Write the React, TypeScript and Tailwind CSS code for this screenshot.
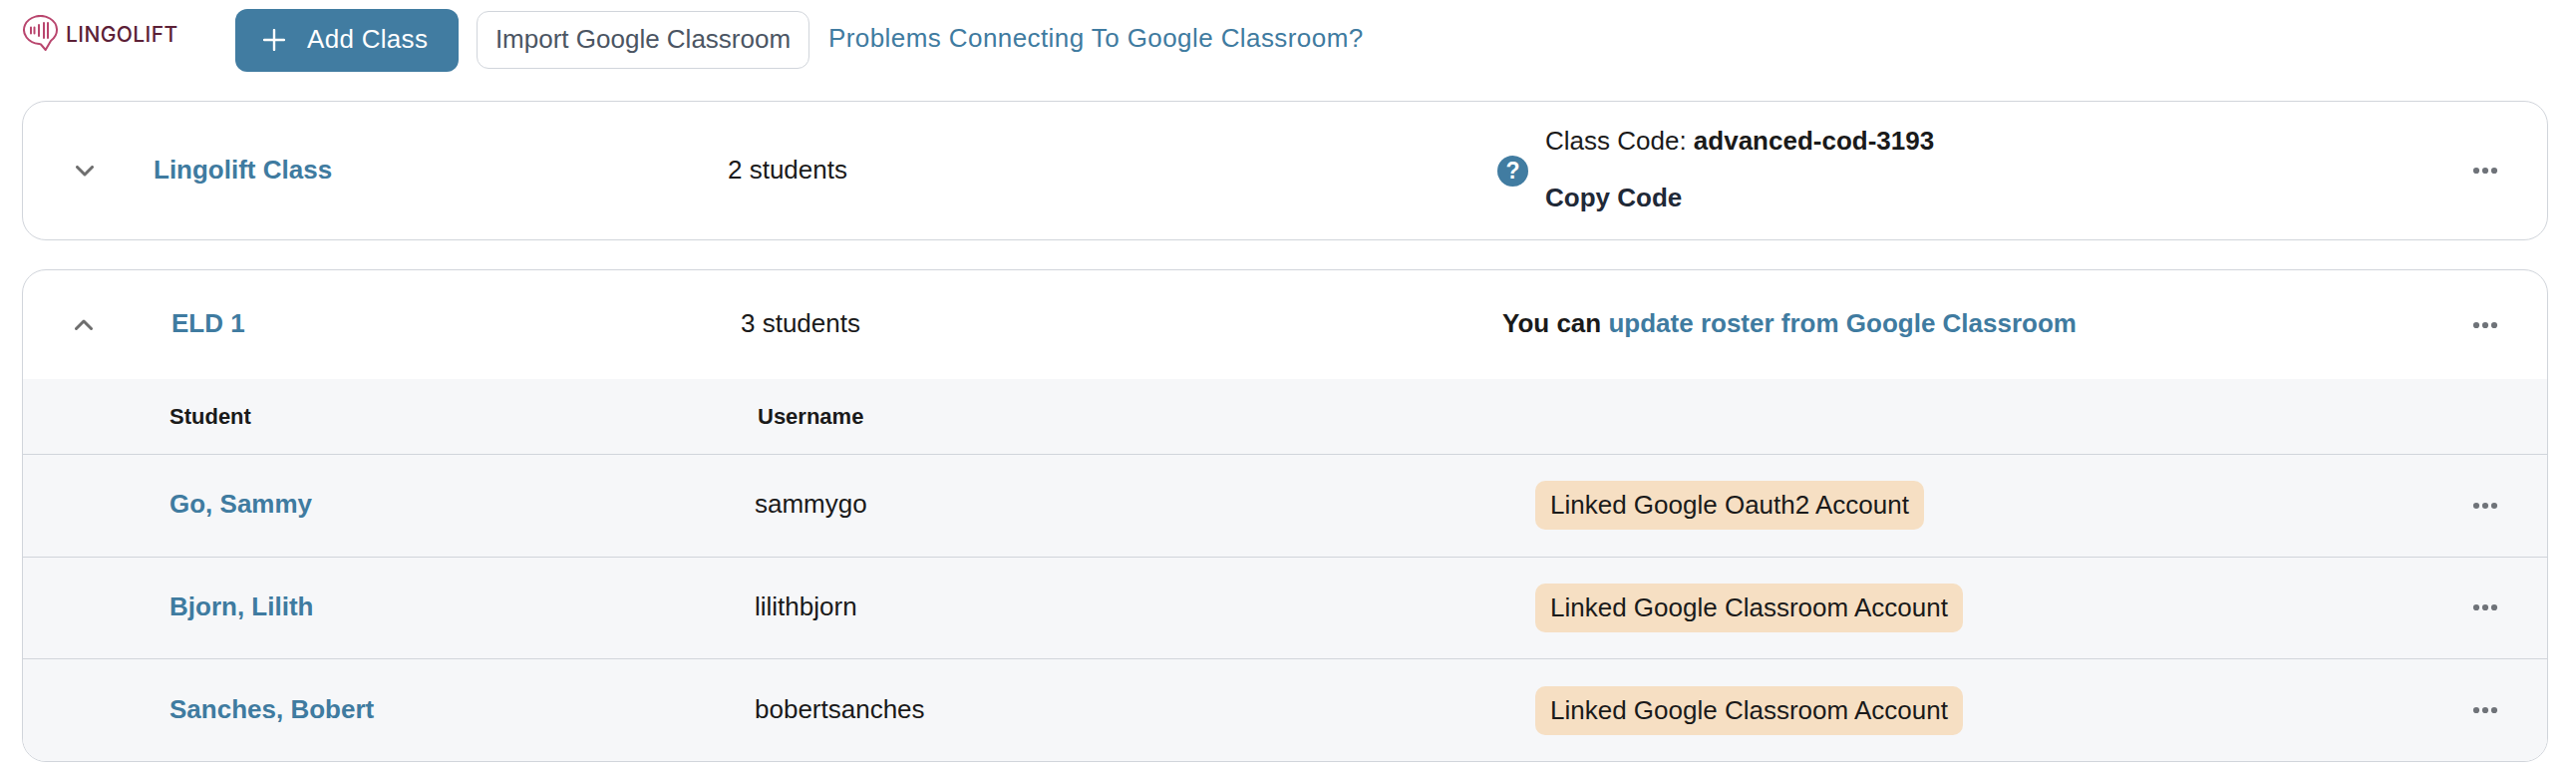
import React from "react";

const Dots = ({ className = "" }: { className?: string }) => (
  <svg width="26" height="8" viewBox="0 0 26 8" className={className} fill="#6f7379">
    <circle cx="4" cy="4" r="3.1" />
    <circle cx="13" cy="4" r="3.1" />
    <circle cx="22" cy="4" r="3.1" />
  </svg>
);

const Chevron = ({ up = false }: { up?: boolean }) => (
  <svg width="18" height="11" viewBox="0 0 18 11" fill="none" stroke="#6e6e6e" strokeWidth="3" strokeLinecap="round" strokeLinejoin="round">
    <path d={up ? "M1.5 9.5 9 2l7.500 7.500" : "M1.500 1.500 9 9l7.500-7.500"} />
  </svg>
);

const Logo = () => (
  <div className="flex items-center gap-[7px]">
    <svg width="37" height="38" viewBox="-1 0 37 38" fill="none" stroke="#b9466e">
      <path d="M28.100 25.700A16.500 14 0 1 0 16.100 28.900L18 29.500L22.700 35Z" strokeWidth="2" strokeLinejoin="round" />
      <path d="M8 12.500v6M11.500 12.500v6M16 10v11M21 8v15M25 8v15" strokeWidth="2" strokeLinecap="round" />
    </svg>
    <span className="font-['Inter',sans-serif] text-[21px] font-medium leading-none tracking-[0.4px] text-[#5c2036]">LINGOLIFT</span>
  </div>
);

const Row = ({ name, user, badge }: { name: string; user: string; badge: string }) => (
  <div className="flex h-[102.67px] items-center border-t border-[#d1d5db] bg-[#f6f7f9]">
    <a className="mb-[2px] ml-[147px] w-[587px] text-[26px] font-bold text-[#3f7ba0]">{name}</a>
    <span className="mb-[2px] w-[783px] text-[26px] text-[#1a1a1a]">{user}</span>
    <span className="rounded-[10px] bg-[#f6dfc3] px-[15px] py-[8px] text-[26px] leading-[33px] text-[#1a1a1a]">{badge}</span>
    <Dots className="ml-auto mr-[49px]" />
  </div>
);

export default function App() {
  return (
    <div className="min-h-[784px] bg-white font-['Liberation_Sans',Arial,sans-serif]">
      <div className="flex h-[101px] items-start pl-[22px]">
        <div className="mt-[15px] w-[214px]"><Logo /></div>
        <button className="mt-[9px] flex h-[63px] w-[224px] items-center rounded-[12px] bg-[#417ca1] pb-[2px] pl-[28px] text-[26px] text-white">
          <svg width="22" height="22" viewBox="0 0 22 22" stroke="#fff" strokeWidth="2.400" strokeLinecap="round"><path d="M11 1v20M1 11h20" /></svg>
          <span className="ml-[22px] tracking-[0.3px]">Add Class</span>
        </button>
        <button className="ml-[18px] mt-[11px] h-[58px] w-[334px] rounded-[12px] border border-[#d1d5db] pb-[2px] text-[26px] text-[#4b5563]">Import Google Classroom</button>
        <a className="ml-[19px] mt-[9px] text-[26px] leading-[58px] tracking-[0.42px] text-[#3f7ba0]">Problems Connecting To Google Classroom?</a>
      </div>

      <div className="mx-[22px] flex h-[140px] w-[2534px] items-center rounded-[24px] border border-[#d1d5db] bg-white">
        <div className="ml-[53px] w-[78px]"><Chevron /></div>
        <a className="mb-[2px] w-[576px] text-[26px] font-bold text-[#3f7ba0]">Lingolift Class</a>
        <span className="mb-[2px] w-[772px] text-[26px] text-[#1a1a1a]">2 students</span>
        <span className="flex h-[31px] w-[31px] items-center justify-center rounded-full bg-[#417ca1] text-[23px] font-bold leading-none text-white">?</span>
        <div className="mb-[3px] ml-[17px] flex flex-col gap-[25px] text-[26px] leading-[32px] text-[#1a1a1a]">
          <span>Class Code: <b>advanced-cod-3193</b></span>
          <b className="text-[#1f2937]">Copy Code</b>
        </div>
        <Dots className="ml-auto mr-[49px]" />
      </div>

      <div className="mx-[22px] mt-[29px] w-[2534px] overflow-hidden rounded-[24px] border border-[#d1d5db] bg-white">
        <div className="flex h-[109px] items-center">
          <div className="ml-[52px] w-[97px]"><Chevron up /></div>
          <a className="mb-[2px] w-[571px] text-[26px] font-bold text-[#3f7ba0]">ELD 1</a>
          <span className="mb-[2px] w-[764px] text-[26px] text-[#1a1a1a]">3 students</span>
          <span className="mb-[2px] text-[26px] font-bold text-[#1a1a1a]">You can <a className="text-[#3f7ba0]">update roster from Google Classroom</a></span>
          <Dots className="ml-auto mr-[49px]" />
        </div>
        <div className="flex h-[75px] items-center bg-[#f6f7f9] text-[22px] font-bold text-[#1a1a1a]">
          <span className="ml-[147px] w-[590px]">Student</span>
          <span>Username</span>
        </div>
        <Row name="Go, Sammy" user="sammygo" badge="Linked Google Oauth2 Account" />
        <Row name="Bjorn, Lilith" user="lilithbjorn" badge="Linked Google Classroom Account" />
        <Row name="Sanches, Bobert" user="bobertsanches" badge="Linked Google Classroom Account" />
      </div>
    </div>
  );
}
